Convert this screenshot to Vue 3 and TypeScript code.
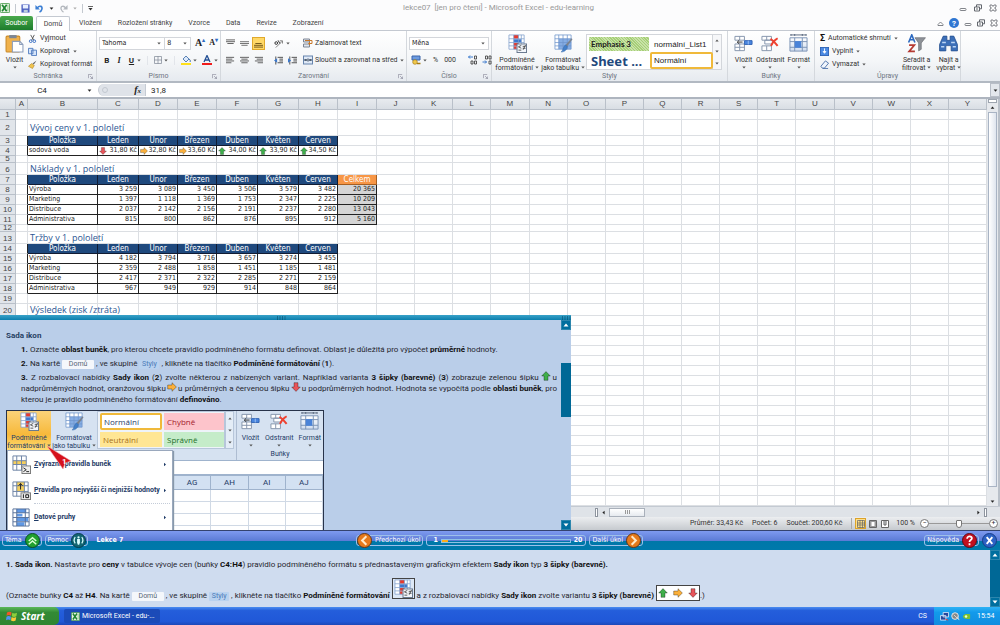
<script setup lang="ts">
import { ref } from 'vue'

type Trend = 'up' | 'flat' | 'down'
interface SheetRow {
  n: number
  size: string
  kind: 'blank' | 'title' | 'head' | 'data'
  label?: string
  values?: string[]
  total?: string
  trends?: Trend[]
}

const letters = 'ABCDEFGHIJKLMNOPQRSTUVWXY'.split('')
const extraColumns = letters.slice(9)
const months = ['Leden', 'Únor', 'Březen', 'Duben', 'Květen', 'Červen']

const blank = (n: number, size = 'std'): SheetRow => ({ n, size, kind: 'blank' })
const title = (n: number, size: string, label: string): SheetRow => ({ n, size, kind: 'title', label })
const head = (n: number, total?: string): SheetRow => ({ n, size: 'std', kind: 'head', label: 'Položka', values: months, total })
const data = (n: number, label: string, values: string[], total?: string, trends?: Trend[]): SheetRow =>
  ({ n, size: 'std', kind: 'data', label, values, total, trends })

const rows: SheetRow[] = [
  blank(1),
  title(2, 'tall', 'Vývoj ceny v 1. pololetí'),
  head(3),
  data(4, 'sodová voda', ['31,80 Kč', '32,80 Kč', '33,60 Kč', '34,00 Kč', '33,90 Kč', '34,50 Kč'], undefined,
    ['down', 'flat', 'flat', 'up', 'up', 'up']),
  blank(5, 'thin'),
  title(6, 'mid', 'Náklady v 1. pololetí'),
  head(7, 'Celkem'),
  data(8, 'Výroba', ['3 259', '3 089', '3 450', '3 506', '3 579', '3 482'], '20 365'),
  data(9, 'Marketing', ['1 397', '1 118', '1 369', '1 753', '2 347', '2 225'], '10 209'),
  data(10, 'Distribuce', ['2 037', '2 142', '2 156', '2 191', '2 237', '2 280'], '13 043'),
  data(11, 'Administrativa', ['815', '800', '862', '876', '895', '912'], '5 160'),
  blank(12, 'thin'),
  title(13, 'mid', 'Tržby v 1. pololetí'),
  head(14),
  data(15, 'Výroba', ['4 182', '3 794', '3 716', '3 657', '3 274', '3 455']),
  data(16, 'Marketing', ['2 359', '2 488', '1 858', '1 451', '1 185', '1 481']),
  data(17, 'Distribuce', ['2 417', '2 371', '2 322', '2 285', '2 271', '2 159']),
  data(18, 'Administrativa', ['967', '949', '929', '914', '848', '864']),
  blank(19),
  title(20, 'mid', 'Výsledek (zisk /ztráta)'),
  ...Array.from({ length: 19 }, (_, i) => blank(21 + i)),
]

const tabs = ['Vložení', 'Rozložení stránky', 'Vzorce', 'Data', 'Revize', 'Zobrazení']
const font = ref('Tahoma')
const fontSize = ref('8')
const numberFormat = ref('Měna')
const cellName = ref('C4')
const formula = ref('31,8')
const zoomLevel = ref(50)
const task = ref(1)
const taskCount = 20
</script>

<template>
  <svg class="defs" aria-hidden="true">
    <defs>
      <linearGradient id="g-grid" x1="0" y1="0" x2="0" y2="1"><stop offset="0" stop-color="#fff" /><stop offset="1" stop-color="#cfdcef" /></linearGradient>
      <symbol id="i-arrow" viewBox="0 0 10 10"><path d="M5 .6 9.3 5H7v4.3H3V5H.7z" fill="currentColor" stroke="#0006" stroke-width=".8" /></symbol>
      <symbol id="i-caret" viewBox="0 0 6 4"><path d="M.5.5h5L3 3.5z" fill="currentColor" /></symbol>
      <symbol id="i-cond" viewBox="0 0 20 20">
        <rect x="1" y="1" width="16" height="15" fill="#fff" />
        <path d="M6 1h5v4H6z" fill="#e8392c" /><path d="M6 5.500h8v3.500H6z" fill="#3c78d0" /><path d="M6 9.500h5v3H6zM6 13h3v3H6z" fill="#e8392c" />
        <path d="M1 1h16v15H1zM1 5h16M1 9h16M1 12.500h16M6 1v15M11 1v15M14 1v15" fill="none" stroke="#7f9fcb" stroke-width=".8" />
        <rect x="9.500" y="10.500" width="10" height="9" fill="#f3f6fb" stroke="#65758c" />
        <path d="M14 12l-3 1.500 3 1.500M11 17h3M15.500 13h3M15.500 15h3M18.500 11.500l-2.500 5" stroke="#444" stroke-width=".9" fill="none" />
      </symbol>
      <symbol id="i-table" viewBox="0 0 20 20">
        <rect x="1" y="1" width="17" height="15" fill="#fff" /><path d="M5 5h13v11H5z" fill="#85ade4" />
        <path d="M1 1h17v15H1zM1 5h17M1 9h17M1 12.500h17M5 1v15M9.500 1v15M14 1v15" fill="none" stroke="#6e94cc" stroke-width=".8" />
        <path d="M19.500 5.500 14 13l-2-1.500 6.500-7z" fill="#7b828d" /><path d="M14 13c0 4-3.500 6-6.500 6 2-1.500 2-5.500 4.500-7.500z" fill="#4480c8" stroke="#2b62a8" stroke-width=".5" />
      </symbol>
      <symbol id="i-insert" viewBox="0 0 20 18">
        <path d="M1 1.500h10v4H1zM1 9.500h10v7H1zM6 1.500v4M6 9.500v7M1 13h10" fill="#fff" stroke="#8595ac" />
        <path d="M11 6h8v4h-8z" fill="#4a86e0" stroke="#2e62b4" /><path d="M15 6v4" stroke="#9fc3f5" /><path d="M9 7.500H3.500M5.500 5.500l-2 2 2 2" fill="none" stroke="#333" />
      </symbol>
      <symbol id="i-delete" viewBox="0 0 20 18">
        <path d="M1 1.500h10v4H1zM1 11.500h10v5H1zM6 1.500v4M6 11.500v5M4 5.500h8v4H4z" fill="#fff" stroke="#8595ac" />
        <path d="M10 4c3 2 5 4 7.500 7.500M17.500 3.500C14 5.500 12 8 10.500 11.500" fill="none" stroke="#ee4130" stroke-width="2" />
      </symbol>
      <symbol id="i-format" viewBox="0 0 20 20">
        <path d="M1 4h18v14H1z" fill="url(#g-grid)" /><path d="M1 4h18v14H1zM1 8h18M1 14h18M6 4v14M14 4v14" fill="none" stroke="#7a92b5" />
        <rect x="6" y="7.500" width="7" height="7" fill="#4a83d8" /><path d="M2 1h16M2 0v2M18 0v2M6 0v2M14 0v2" stroke="#56657c" fill="none" />
      </symbol>
      <symbol id="i-excel" viewBox="0 0 12 12">
        <rect x=".5" y=".5" width="11" height="11" rx="1" fill="#e9f5e6" stroke="#3d9440" /><path d="M2.500 2 8 10M8 2 2.500 10" stroke="#1e8431" stroke-width="2" /><path d="M9.500 2v8" stroke="#81be7c" />
      </symbol>
      <symbol id="i-grip" viewBox="0 0 10 4"><path d="M1 1h1M3.500 1h1M6 1h1M8.500 1h1M1 3h1M3.500 3h1M6 3h1M8.500 3h1" stroke="#05405c" /></symbol>
      <symbol id="i-min" viewBox="0 0 8 8"><rect x="1" y="4.500" width="6" height="2" rx=".8" fill="#fff" stroke="#62666d" stroke-width=".8" /></symbol>
      <symbol id="i-restore" viewBox="0 0 8 8"><path d="M2.500 3V.8h5v4h-2M.5 3h5v4h-5z" fill="none" stroke="#62666d" /><path d="M2 5h2" stroke="#62666d" /></symbol>
      <symbol id="i-close" viewBox="0 0 8 8"><path d="M1 1h2l1 1.500L5 1h2v2L5.500 4 7 5v2H5L4 5.500 3 7H1V5l1.500-1L1 3z" fill="#fff" stroke="#62666d" stroke-width=".8" /></symbol>
      <symbol id="i-alignl" viewBox="0 0 10 9"><path d="M0 1h9M0 3h7M0 5h9M0 7h6" stroke="#555" /></symbol>
      <symbol id="i-alignc" viewBox="0 0 10 9"><path d="M0 1h10M1.500 3h7M0 5h10M1.500 7h7" stroke="#555" /></symbol>
      <symbol id="i-alignr" viewBox="0 0 10 9"><path d="M1 1h9M3 3h7M1 5h9M4 7h6" stroke="#555" /></symbol>
      <symbol id="i-top" viewBox="0 0 10 9"><path d="M0 .5h10M0 2.500h10M1.500 4.500h7" stroke="#555" /></symbol>
      <symbol id="i-mid" viewBox="0 0 10 9"><path d="M0 2.500h10M0 4.500h10M1.500 6.500h7" stroke="#666" /></symbol>
      <symbol id="i-bot" viewBox="0 0 10 9"><path d="M1.500 4.500h7M0 6.500h10M0 8.500h10" stroke="#6a4f14" /></symbol>
      <symbol id="i-merge" viewBox="0 0 10 9"><rect x=".5" y=".5" width="9" height="8" fill="#dfe9f7" stroke="#6784ad" /><path d="M1 4.500h2.500M9 4.500H6.500M2.500 3.500l1 1-1 1M7.500 3.500l-1 1 1 1M5 3v3" stroke="#234" fill="none" /></symbol>
      <symbol id="i-wrap" viewBox="0 0 10 9"><path d="M.5.500h6v3h-6zM.5 5.500h6v3h-6z" fill="#e0e7f0" stroke="#7e8694" /><path d="M2 2h7v3H6M7 3.500 5.500 5 7 6.500" fill="none" stroke="#c8782a" /></symbol>
      <symbol id="i-launch" viewBox="0 0 6 6"><path d="M.5 5V.500H5M2.500 2.500l3 3M5.500 3v2.500H3" fill="none" stroke="#889" stroke-width=".8" /></symbol>
    </defs>
  </svg>

  <div class="screen">
    <header class="titlebar">
      <div class="quick">
        <svg class="s10"><use href="#i-excel" /></svg><i class="vr"></i>
        <button aria-label="Uložit"><svg class="s9" viewBox="0 0 10 10"><path d="M.5.500h9v9h-9z" fill="#4b5fc0" /><path d="M2 1h6v4H2z" fill="#e8f0ff" /><path d="M3 6.500h4.500V9.500H3z" fill="#bcd" /></svg></button>
        <button aria-label="Zpět"><svg class="s9" viewBox="0 0 10 10"><path d="M2.500 4.500C5 1 9 2.500 7.500 6 7 7.500 6 8.500 5 9" fill="none" stroke="#3c7fd4" stroke-width="1.800" /><path d="M.5 1v5h5z" fill="#3c7fd4" /></svg></button>
        <svg class="caret dark"><use href="#i-caret" /></svg>
        <button aria-label="Znovu"><svg class="s9" viewBox="0 0 10 10"><path d="M7.500 4.500C5 1 1 2.500 2.500 6 3 7.500 4 8.500 5 9" fill="none" stroke="#b4b8be" stroke-width="1.500" /><path d="M9.500 1v5h-5z" fill="#b4b8be" /></svg></button>
        <svg class="caret pale"><use href="#i-caret" /></svg><i class="vr"></i>
        <svg class="s5" viewBox="0 0 6 6"><path d="M0 .5h6" stroke="#333" /><path d="M.5 2.500h5L3 5.500z" fill="#333" /></svg>
      </div>
      <h1>lekce07 &nbsp;[jen pro čtení] - Microsoft Excel - edu-learning</h1>
      <div class="winctl">
        <button aria-label="Minimalizovat"><svg class="s8"><use href="#i-min" /></svg></button>
        <button aria-label="Obnovit"><svg class="s8"><use href="#i-restore" /></svg></button>
        <button aria-label="Zavřít"><svg class="s8"><use href="#i-close" /></svg></button>
      </div>
    </header>

    <nav class="tabs">
      <button class="file">Soubor</button>
      <button class="active">Domů</button>
      <button v-for="t in tabs" :key="t">{{ t }}</button>
      <div class="winctl inner">
        <button aria-label="Sbalit pás"><svg class="s7" viewBox="0 0 7 7"><path d="M1 4.500 3.500 2 6 4.500v1H1z" fill="#fff" stroke="#62666d" stroke-width=".8" /></svg></button>
        <button class="helpdot" aria-label="Nápověda Excel">?</button>
        <button aria-label="Minimalizovat sešit"><svg class="s8"><use href="#i-min" /></svg></button>
        <button aria-label="Obnovit sešit"><svg class="s8"><use href="#i-restore" /></svg></button>
        <button aria-label="Zavřít sešit"><svg class="s8"><use href="#i-close" /></svg></button>
      </div>
    </nav>

    <section class="ribbon">
      <div class="group g-clip">
        <div class="tools">
          <button class="big paste">
            <svg class="s19" viewBox="0 0 18 18"><rect x="1" y="2" width="13" height="15" rx="1" fill="#f0b24c" stroke="#c98a29" /><rect x="4" y="1" width="7" height="3" fill="#7d8794" /><path d="M7 7h7l3 3v7H7z" fill="#fff" stroke="#8c9ebb" /><path d="M14 7v3h3" fill="none" stroke="#8c9ebb" /></svg>
            <span>Vložit</span><svg class="caret"><use href="#i-caret" /></svg>
          </button>
          <div class="stack">
            <button><svg class="s9" viewBox="0 0 10 10"><path d="M3 1l3.500 6M7 1 4 7" stroke="#555" fill="none" /><circle cx="3" cy="8" r="1.500" fill="none" stroke="#2f68c0" /><circle cx="7" cy="8" r="1.500" fill="none" stroke="#2f68c0" /></svg>Vyjmout</button>
            <button><svg class="s9" viewBox="0 0 10 10"><path d="M.5 1.500h5v6h-5zM4 3.500h5.500v6H4z" fill="#d6e5fa" stroke="#4d79bd" /></svg>Kopírovat<svg class="caret"><use href="#i-caret" /></svg></button>
            <button><svg class="s9" viewBox="0 0 10 10"><path d="M9.500.5 6.500 5 5 4z" fill="#666" /><path d="M4 4l3 2-2 3.500L.5 7z" fill="#f0c44d" stroke="#a97c1e" stroke-width=".6" /></svg>Kopírovat formát</button>
          </div>
        </div>
        <div class="glabel">Schránka<svg class="s5 launch"><use href="#i-launch" /></svg></div>
      </div>

      <div class="group g-font">
        <div class="tools rows">
          <div class="line">
            <div class="combo w-font"><select v-model="font" aria-label="Písmo"><option>Tahoma</option></select><svg class="caret"><use href="#i-caret" /></svg></div>
            <div class="combo w-size"><select v-model="fontSize" aria-label="Velikost písma"><option>8</option></select><svg class="caret"><use href="#i-caret" /></svg></div>
            <button class="serif a-big" aria-label="Zvětšit písmo">A<sup>▴</sup></button>
            <button class="serif a-small" aria-label="Zmenšit písmo">A<sup>▾</sup></button>
          </div>
          <div class="line fmt">
            <button class="fb">B</button><button class="fb it">I</button><button class="fb un">U</button><svg class="caret"><use href="#i-caret" /></svg><i class="vr"></i>
            <button aria-label="Ohraničení"><svg class="s8" viewBox="0 0 8 8"><path d="M.5.500h7v7h-7zM4 0v8M0 4h8" fill="none" stroke="#8b93a0" stroke-width=".8" /></svg></button><svg class="caret"><use href="#i-caret" /></svg><i class="vr"></i>
            <button aria-label="Barva výplně"><svg class="s10" viewBox="0 0 10 10"><path d="M2 4 5 1l3 3-3 3z" fill="#dbe8f9" stroke="#3667a5" stroke-width=".8" /><path d="M8 4c1.500 1 1.500 2 1 3" stroke="#3667a5" fill="none" /><path d="M0 8h10v2H0z" fill="#ffe01b" /></svg></button><svg class="caret"><use href="#i-caret" /></svg>
            <button aria-label="Barva písma"><svg class="s10" viewBox="0 0 10 10"><path d="M2 7 5 .5 8 7M3 5h4" fill="none" stroke="#234f94" stroke-width="1.300" /><path d="M0 8h10v2H0z" fill="#f01c1c" /></svg></button><svg class="caret"><use href="#i-caret" /></svg>
          </div>
        </div>
        <div class="glabel">Písmo<svg class="s5 launch"><use href="#i-launch" /></svg></div>
      </div>

      <div class="group g-align">
        <div class="tools rows">
          <div class="line al">
            <button aria-label="Nahoru"><svg class="s9"><use href="#i-top" /></svg></button>
            <button aria-label="Na střed"><svg class="s9"><use href="#i-mid" /></svg></button>
            <button class="on" aria-label="Dolů"><svg class="s9"><use href="#i-bot" /></svg></button>
            <button class="orient" aria-label="Orientace"><svg class="s9" viewBox="0 0 10 10"><path d="M2 9.500 9 2.500M6.500 2H9.500v3" fill="none" stroke="#777" /><circle cx="2.500" cy="4.500" r="1.500" fill="none" stroke="#222" /><path d="M4.500 1.500 6.500 5" stroke="#222" /></svg></button><svg class="caret"><use href="#i-caret" /></svg>
            <button class="txt"><svg class="s10"><use href="#i-wrap" /></svg>Zalamovat text</button>
          </div>
          <div class="line al">
            <button aria-label="Vlevo"><svg class="s9"><use href="#i-alignl" /></svg></button>
            <button aria-label="Na střed vodorovně"><svg class="s9"><use href="#i-alignc" /></svg></button>
            <button aria-label="Vpravo"><svg class="s9"><use href="#i-alignr" /></svg></button>
            <button class="orient" aria-label="Zmenšit odsazení"><svg class="s9" viewBox="0 0 10 9"><path d="M4 1h6M6 3h4M6 5h4M4 7h6M2 0v9" stroke="#444" /><path d="M3.500 2 0 4.500 3.500 7z" fill="#3b78cc" /></svg></button>
            <button aria-label="Zvětšit odsazení"><svg class="s9" viewBox="0 0 10 9"><path d="M4 1h6M6 3h4M6 5h4M4 7h6M2 0v9" stroke="#444" /><path d="M0 2l3.500 2.500L0 7z" fill="#3b78cc" /></svg></button>
            <button class="txt"><svg class="s10"><use href="#i-merge" /></svg>Sloučit a zarovnat na střed<svg class="caret"><use href="#i-caret" /></svg></button>
          </div>
        </div>
        <div class="glabel">Zarovnání<svg class="s5 launch"><use href="#i-launch" /></svg></div>
      </div>

      <div class="group g-num">
        <div class="tools rows">
          <div class="line"><div class="combo w-num"><select v-model="numberFormat" aria-label="Formát čísla"><option>Měna</option></select><svg class="caret"><use href="#i-caret" /></svg></div></div>
          <div class="line num">
            <button aria-label="Formát měny"><svg class="s10" viewBox="0 0 10 10"><path d="M1 1h8v4H1z" fill="#6b9ae0" stroke="#3b65aa" /><circle cx="4" cy="7" r="2.300" fill="#f2c94c" stroke="#a67b13" stroke-width=".7" /><path d="M6 8.500h3.500" stroke="#a67b13" stroke-width="1.500" /></svg></button><svg class="caret"><use href="#i-caret" /></svg>
            <button>%</button><button>000</button><i class="vr"></i>
            <button class="dec" aria-label="Přidat desetinné místo"><svg class="s10" viewBox="0 0 10 10"><path d="M5 2H.5M2 .5.500 2 2 3.500" fill="none" stroke="#3b78cc" /><path d="M6.500 1h2v3h-2zM3 6h2v3H3zM6.500 6h2v3h-2z" fill="none" stroke="#333" stroke-width=".8" /></svg></button>
            <button class="dec" aria-label="Odebrat desetinné místo"><svg class="s10" viewBox="0 0 10 10"><path d="M.5 7h4M3 5.500 4.500 7 3 8.500" fill="none" stroke="#3b78cc" /><path d="M3.500 1h2v3h-2zM7 1h2v3H7zM7 6h2v3H7z" fill="none" stroke="#333" stroke-width=".8" /></svg></button>
          </div>
        </div>
        <div class="glabel">Číslo<svg class="s5 launch"><use href="#i-launch" /></svg></div>
      </div>

      <div class="group g-style">
        <div class="tools">
          <button class="big wide"><svg class="s19"><use href="#i-cond" /></svg><span>Podmíněné<br />formátování <svg class="caret"><use href="#i-caret" /></svg></span></button>
          <button class="big wide"><svg class="s19"><use href="#i-table" /></svg><span>Formátovat<br />jako tabulku <svg class="caret"><use href="#i-caret" /></svg></span></button>
          <div class="gallery">
            <button class="emph">Emphasis 3</button><button>normální_List1</button>
            <button class="sheetname">Sheet ...</button><button class="picked">Normální</button>
          </div>
          <div class="spin"><svg class="caret up"><use href="#i-caret" /></svg><svg class="caret"><use href="#i-caret" /></svg><svg class="caret"><use href="#i-caret" /></svg></div>
        </div>
        <div class="glabel">Styly</div>
      </div>

      <div class="group g-cells">
        <div class="tools">
          <button class="big"><svg class="s19"><use href="#i-insert" /></svg><span>Vložit</span><svg class="caret"><use href="#i-caret" /></svg></button>
          <button class="big"><svg class="s19"><use href="#i-delete" /></svg><span>Odstranit</span><svg class="caret"><use href="#i-caret" /></svg></button>
          <button class="big"><svg class="s19"><use href="#i-format" /></svg><span>Formát</span><svg class="caret"><use href="#i-caret" /></svg></button>
        </div>
        <div class="glabel">Buňky</div>
      </div>

      <div class="group g-edit">
        <div class="tools">
          <div class="stack">
            <button><b class="sigma">Σ</b>Automatické shrnutí<svg class="caret"><use href="#i-caret" /></svg></button>
            <button><svg class="s9" viewBox="0 0 10 10"><rect x=".5" y=".5" width="9" height="9" fill="#4c8ae2" stroke="#2d62b5" /><path d="M5 1.500v4M3.500 5 5 7l1.500-2z" fill="#fff" stroke="#fff" /></svg>Vyplnit<svg class="caret"><use href="#i-caret" /></svg></button>
            <button><svg class="s9" viewBox="0 0 10 10"><path d="M1 7 6 1l3.500 2.500L5 9H2.500z" fill="#f0f5fc" stroke="#4a6fa8" /><path d="M3 9.500h6" stroke="#4a6fa8" /></svg>Vymazat<svg class="caret"><use href="#i-caret" /></svg></button>
          </div>
          <button class="big"><svg class="s19" viewBox="0 0 18 18"><path d="M1.500 8 4.500.8 7.500 8M2.500 5.500h4" fill="none" stroke="#2d6ac0" stroke-width="1.500" /><path d="M2 10.500h5L2 16.500h5.500" fill="none" stroke="#b53a33" stroke-width="1.600" /><path d="M7.500 3.500h10l-4 5v6l-2.500 1.500V8.500z" fill="#8e9298" stroke="#63676d" stroke-width=".6" /></svg><span>Seřadit a<br />filtrovat <svg class="caret"><use href="#i-caret" /></svg></span></button>
          <button class="big"><svg class="s19" viewBox="0 0 18 18"><path d="M4 2h3.500v4h3V2H14l3.500 8v6h-6v-5h-5v5h-6v-6z" fill="#3c6fb8" stroke="#244e8d" stroke-width=".7" /><path d="M3 8h3.500M11.500 8H15M2 12h3M13 12h3" stroke="#bcd6f5" stroke-width="1.500" /></svg><span>Najít a<br />vybrat <svg class="caret"><use href="#i-caret" /></svg></span></button>
        </div>
        <div class="glabel">Úpravy</div>
      </div>
    </section>

    <div class="formulabar">
      <input v-model="cellName" class="namebox" aria-label="Pole názvů" />
      <svg class="caret dark"><use href="#i-caret" /></svg>
      <div class="fx"><i></i><em>f<small>x</small></em></div>
      <input v-model="formula" class="formula" aria-label="Řádek vzorců" />
      <button class="expand" aria-label="Rozbalit"><svg class="caret dark"><use href="#i-caret" /></svg></button>
    </div>

    <main class="workspace">
      <div class="sheetrow">
        <div class="sheetclip">
          <table class="sheet">
            <colgroup>
              <col class="c-h" /><col class="c-a" /><col class="c-b" />
              <col class="c-m" /><col class="c-n" /><col class="c-n" /><col class="c-m" /><col class="c-m" /><col class="c-n" /><col class="c-n" />
              <col v-for="c in extraColumns" :key="c" />
            </colgroup>
            <thead>
              <tr><th class="corner"></th><th v-for="l in letters" :key="l">{{ l }}</th></tr>
            </thead>
            <tbody>
              <tr v-for="r in rows" :key="r.n" :class="[r.size, r.kind]">
                <th><div class="rh">{{ r.n }}</div></th>
                <td :class="{ edge: r.label && r.kind !== 'title' }"></td>
                <td class="lab">{{ r.label }}</td>
                <template v-if="r.values">
                  <td v-for="(v, i) in r.values" :key="i" class="val">
                    <div class="cell">
                      <svg v-if="r.trends" class="s8" :class="r.trends[i]"><use href="#i-arrow" /></svg><span>{{ v }}</span>
                    </div>
                  </td>
                </template>
                <template v-else><td v-for="i in 6" :key="i"></td></template>
                <td :class="{ total: r.total }">{{ r.total }}</td>
                <td v-for="c in extraColumns" :key="c"></td>
              </tr>
            </tbody>
          </table>
        </div>
        <div class="vscroll">
          <span class="split"></span><svg class="caret up dark"><use href="#i-caret" /></svg>
          <span class="thumb"></span>
          <svg class="caret dark"><use href="#i-caret" /></svg>
        </div>
      </div>
      <div class="hscroll">
        <span class="hpad"></span><i class="split"></i>
        <svg class="caret left dark"><use href="#i-caret" /></svg><span class="thumb"><i></i><i></i><i></i></span>
        <svg class="caret right dark end"><use href="#i-caret" /></svg><i class="split"></i>
      </div>
      <footer class="status">
        <span>Průměr: 33,43 Kč</span><span>Počet: 6</span><span>Součet: 200,60 Kč</span>
        <div class="views">
          <button class="on" aria-label="Normální"><svg class="s8" viewBox="0 0 8 8"><path d="M.5.500h7v7h-7zM0 3h8M0 5h8M3 0v8M5.500 0v8" fill="none" stroke="#666" stroke-width=".7" /></svg></button>
          <button aria-label="Rozložení"><svg class="s8" viewBox="0 0 8 8"><path d="M.5.500h7v7h-7z" fill="#999" stroke="#666" /><path d="M2.500 2h3v4h-3z" fill="#fff" /></svg></button>
          <button aria-label="Konce stránek"><svg class="s8" viewBox="0 0 8 8"><path d="M.5.500h7v7h-7zM3 0v5h2V0" fill="#fff" stroke="#666" /></svg></button>
        </div>
        <span>100 %</span>
        <div class="zoomer"><button>−</button><input v-model="zoomLevel" type="range" aria-label="Lupa" /><button>+</button></div>
      </footer>

      <aside class="help">
        <div class="grab"><svg class="g1"><use href="#i-grip" /></svg><svg class="g2"><use href="#i-grip" /></svg></div>
        <div class="helpmain">
          <article>
            <h2>Sada ikon</h2>
            <p><b>1.</b> Označte <b>oblast buněk</b>, pro kterou chcete pravidlo podmíněného formátu definovat. Oblast je důležitá pro výpočet <b>průměrné</b> hodnoty.</p>
            <p><b>2.</b> Na kartě <span class="chip">Domů</span> , ve skupině <span class="chip blue">Styly</span> , klikněte na tlačítko <b>Podmíněné formátování</b> (<b>1</b>).</p>
            <p class="just"><b>3.</b> Z rozbalovací nabídky <b>Sady ikon</b> (<b>2</b>) zvolte některou z nabízených variant. Například varianta <b>3 šipky (barevné)</b> (<b>3</b>) zobrazuje zelenou šipku <svg class="s10 up"><use href="#i-arrow" /></svg> u nadprůměrných hodnot, oranžovou šipku <svg class="s10 flat"><use href="#i-arrow" /></svg> u průměrných a červenou šipku <svg class="s10 down"><use href="#i-arrow" /></svg> u podprůměrných hodnot. Hodnota se vypočítá podle <b>oblasti buněk</b>, pro kterou je pravidlo podmíněného formátování <b>definováno</b>.</p>
            <div class="demo">
              <div class="demotop">
                <button class="big hot"><svg class="s19"><use href="#i-cond" /></svg><span>Podmíněné<br />formátování <svg class="caret"><use href="#i-caret" /></svg></span></button>
                <button class="big wide"><svg class="s19"><use href="#i-table" /></svg><span>Formátovat<br />jako tabulku <svg class="caret"><use href="#i-caret" /></svg></span></button>
                <div class="swatches">
                  <button class="picked">Normální</button><button class="bad">Chybně</button>
                  <button class="neutral">Neutrální</button><button class="good">Správně</button>
                </div>
                <div class="spin"><svg class="caret up"><use href="#i-caret" /></svg><svg class="caret"><use href="#i-caret" /></svg><svg class="caret"><use href="#i-caret" /></svg></div>
                <div class="democells">
                  <div class="trio">
                    <button class="big"><svg class="s19"><use href="#i-insert" /></svg><span>Vložit</span><svg class="caret"><use href="#i-caret" /></svg></button>
                    <button class="big"><svg class="s19"><use href="#i-delete" /></svg><span>Odstranit</span><svg class="caret"><use href="#i-caret" /></svg></button>
                    <button class="big"><svg class="s19"><use href="#i-format" /></svg><span>Formát</span><svg class="caret"><use href="#i-caret" /></svg></button>
                  </div>
                  <div class="dlabel">Buňky</div>
                </div>
              </div>
              <div class="demobar"></div>
              <table class="demosheet">
                <thead><tr><th>AG</th><th>AH</th><th>AI</th><th>AJ</th></tr></thead>
                <tbody><tr v-for="i in 4" :key="i"><td v-for="j in 4" :key="j"></td></tr></tbody>
              </table>
              <div class="menu">
                <button><svg class="s19" viewBox="0 0 20 20"><path d="M1 1h14v15H1z" fill="#fff" /><path d="M1 6h14v4H1z" fill="#f6cf5c" /><path d="M1 1h14v15H1zM1 6h14M1 10h14M5 1v15M10 1v15" fill="none" stroke="#6b82a4" /><rect x="10.500" y="11.500" width="9" height="8" fill="#eee" stroke="#777" /><path d="M12 13.500l3 2-3 2M15 17.500h3" fill="none" stroke="#222" /></svg><span><u>Z</u>výraznit pravidla buněk</span><svg class="caret right"><use href="#i-caret" /></svg></button>
                <button><svg class="s19" viewBox="0 0 20 20"><path d="M1 1h16v15H1z" fill="#fff" /><path d="M5 1h8v10H5z" fill="#f6cf5c" /><path d="M1 1h16v15H1zM1 5h16M1 11h16M5 1v15M13 1v15" fill="none" stroke="#6b82a4" /><path d="M9 9V3M7 5l2-2.500L11 5" stroke="#222" fill="none" /><rect x="9.500" y="12.500" width="10" height="7" fill="#eee" stroke="#777" /><path d="M12 14v4M14.500 14.500h3v3h-3z" stroke="#111" fill="none" /></svg><span><u>P</u>ravidla pro nejvyšší či nejnižší hodnoty</span><svg class="caret right"><use href="#i-caret" /></svg></button>
                <hr />
                <button><svg class="s19" viewBox="0 0 20 20"><path d="M1 1h17v18H1z" fill="#fff" /><path d="M5 1h10v4H5zM5 6h6v3H5zM5 10h12v4H5zM5 15h8v4H5z" fill="#5e98e6" /><path d="M1 1h17v18H1zM1 5h17M1 10h17M1 14.500h17M5 1v18M14 1v18" fill="none" stroke="#557099" /></svg><span><u>D</u>atové pruhy</span><svg class="caret right"><use href="#i-caret" /></svg></button>
              </div>
              <div class="pointer"><svg viewBox="0 0 26 26"><path d="M1 1 25 16l-6 2-2 6z" fill="#d6111c" stroke="#f2a0a2" stroke-width=".6" /></svg><b>1</b></div>
            </div>
          </article>
          <div class="bluescroll clear"><button aria-label="Posunout nahoru"><svg class="caret up"><use href="#i-caret" /></svg></button><span class="thumb"></span><button aria-label="Posunout dolů"><svg class="caret"><use href="#i-caret" /></svg></button></div>
        </div>
      </aside>
    </main>

    <section class="lesson">
      <div class="side">
        <button class="pill">Téma<svg class="s15" viewBox="0 0 16 16"><circle cx="8" cy="8" r="7.500" fill="#21a02f" stroke="#0b4a28" /><path d="M4 8.500 8 5l4 3.500M4 12l4-3.500 4 3.500" fill="none" stroke="#d9ffd2" stroke-width="1.600" /></svg></button>
        <button class="pill">Pomoc<svg class="s15" viewBox="0 0 16 16"><circle cx="8" cy="8" r="7.500" fill="#136673" stroke="#063a4c" /><path d="M6.500 6.500h3v4l-.8 2H7.300l-.8-2z" fill="#dff" /><circle cx="8" cy="4.700" r="1.200" fill="#dff" /><path d="M4.500 4.500c-1.500 2-1.500 4.500 0 6.500M11.500 4.500c1.500 2 1.500 4.500 0 6.500" fill="none" stroke="#dff" stroke-width="1.300" /></svg></button>
        <strong>Lekce 7</strong>
      </div>
      <div class="center">
        <button class="pill lead"><svg class="s15" viewBox="0 0 16 16"><circle cx="8" cy="8" r="7.500" fill="#e5791b" stroke="#5c3418" /><path d="M10 3.500 5.500 8l4.500 4.500" fill="none" stroke="#ffe9c8" stroke-width="2.200" /></svg>Předchozí úkol</button>
        <div class="pill prog"><b>{{ task }}</b><div class="track"><span :style="{ width: (task / taskCount) * 100 + '%' }"></span></div><b>{{ taskCount }}</b></div>
        <button class="pill">Další úkol<svg class="s15" viewBox="0 0 16 16"><circle cx="8" cy="8" r="7.500" fill="#e5791b" stroke="#5c3418" /><path d="M6 3.500 10.500 8 6 12.500" fill="none" stroke="#ffe9c8" stroke-width="2.200" /></svg></button>
      </div>
      <div class="side right">
        <button class="pill">Nápověda<svg class="s15" viewBox="0 0 16 16"><circle cx="8" cy="8" r="7.500" fill="#c2101f" stroke="#5a0a14" /><path d="M5.500 6C5.500 2.500 11 3 10.500 6c-.3 1.600-2.500 1.500-2.500 3.500M8 11v2" fill="none" stroke="#fff" stroke-width="1.900" /></svg></button>
        <button class="bare" aria-label="Zavřít lekci"><svg class="s15" viewBox="0 0 16 16"><circle cx="8" cy="8" r="7.500" fill="#2d62c4" stroke="#173a84" /><path d="M5 4.500l6 7M11 4.500l-6 7" stroke="#fff" stroke-width="2" /></svg></button>
      </div>
    </section>

    <section class="task">
      <div class="tasktext">
        <p><b>1. Sada ikon.</b> Nastavte pro <b>ceny</b> v tabulce vývoje cen (buňky <b>C4:H4</b>) pravidlo podmíněného formátu s přednastaveným grafickým efektem <b>Sady ikon</b> typ <b>3 šipky (barevné).</b></p>
        <p>(Označte buňky <b>C4</b> až <b>H4</b>. Na kartě <span class="chip">Domů</span> , ve skupině <span class="chip blue">Styly</span> , klikněte na tlačítko <b>Podmíněné formátování</b> <span class="boxed"><svg class="s19"><use href="#i-cond" /></svg></span> a z rozbalovací nabídky <b>Sady ikon</b> zvolte variantu <b>3 šipky (barevné)</b> <span class="boxed trends"><svg class="s10 up"><use href="#i-arrow" /></svg><svg class="s10 flat"><use href="#i-arrow" /></svg><svg class="s10 down"><use href="#i-arrow" /></svg></span>.)</p>
      </div>
      <div class="bluescroll"><button aria-label="Nahoru"><svg class="caret up"><use href="#i-caret" /></svg></button><span></span><button aria-label="Dolů"><svg class="caret"><use href="#i-caret" /></svg></button></div>
    </section>

    <footer class="taskbar">
      <button class="start"><svg class="s12" viewBox="0 0 12 12"><path d="M1 2.500c2-1 3-1 4.500 0L5 5.800c-1.500-1-3-.8-4.500 0z" fill="#f0562a" /><path d="M6.300 2.800c1.500 1 3 .8 4.700 0l-.6 3.400c-1.500 1-3 1-4.600 0z" fill="#8ccf3c" /><path d="M.5 6.800c1.500-1 3-.8 4.500 0l-.6 3.400c-1.500-1-3-.8-4.400 0z" fill="#4f94f2" /><path d="M5.600 7.100c1.500 1 3 1 4.600 0l-.6 3.400c-1.500 1-3 1-4.600 0z" fill="#fcc937" /></svg>Start</button>
      <button class="app"><svg class="s9"><use href="#i-excel" /></svg>Microsoft Excel - edu-...</button>
      <span class="lang">CS</span>
      <div class="tray">
        <svg class="s9" viewBox="0 0 10 10"><path d="M3.500.5h6v5h-6zM.5 4h6v5h-6z" fill="#27479c" stroke="#d3e2f7" /><path d="M6 8l3 1" stroke="#e33" /></svg>
        <svg class="s9" viewBox="0 0 10 10"><circle cx="4.500" cy="4.500" r="3.700" fill="#888" stroke="#eee" /><path d="M3 3l5 5M7 5l2 4" stroke="#ddd" /></svg>
        <svg class="s9" viewBox="0 0 10 10"><path d="M1 5c1-3 4-3 8-2.500v5C5 8 2 8 1 5z" fill="#7fc130" /><circle cx="4.500" cy="5" r="1.400" fill="#e9ffd0" /></svg>
        <time>15:54</time>
      </div>
    </footer>
  </div>
</template>

<style>
html, body { margin: 0; height: 100%; }
body { overflow: hidden; }
</style>

<style scoped>
* { box-sizing: border-box; }
.defs { position: absolute; width: 0; height: 0; }
.screen { display: flex; flex-direction: column; height: 100vh; overflow: hidden; background: #fcfcfd; color: #222; font: 7px/9px Roboto, "Noto Sans", sans-serif; }
button { display: flex; align-items: center; margin: 0; padding: 0; border: 0; background: none; color: inherit; font: inherit; white-space: nowrap; }
input, select { margin: 0; padding: 0; border: 0; background: none; color: inherit; font: inherit; outline: 0; appearance: none; min-width: 0; border-radius: 0; }
svg { flex: none; }
.s5 { width: 5px; height: 5px; } .s7 { width: 7px; height: 7px; } .s8 { width: 8px; height: 8px; } .s9 { width: 9px; height: 9px; }
.s10 { width: 10px; height: 10px; } .s12 { width: 12px; height: 12px; } .s15 { width: 15px; height: 15px; } .s19 { width: 19px; height: 19px; }
.caret { width: 4px; height: 3px; color: #555; }
.caret.dark { color: #222; width: 5px; } .caret.pale { color: #aaa; }
.caret.up { transform: rotate(180deg); } .caret.left { transform: rotate(90deg); } .caret.right { transform: rotate(-90deg); }
.up:not(.caret) { color: #3fae4b; } .down { color: #e8555b; transform: rotate(180deg); } .flat { color: #fbb03b; transform: rotate(90deg); }
.vr { width: 1px; height: 9px; background: #c3c8cf; }

.titlebar { display: grid; grid-template-columns: 1fr auto 1fr; align-items: center; height: 16px; flex: none; padding-right: 3px; }
.quick { display: flex; align-items: center; gap: 5px; height: 12px; }
h1 { margin: 0; font-size: 8px; font-weight: 400; color: #999; line-height: 14px; }
.winctl { display: flex; justify-content: flex-end; gap: 7px; }
.tabs { display: flex; align-items: stretch; height: 15px; flex: none; padding-right: 2px; border-bottom: 1px solid #c4c9d1; color: #444; }
.tabs > button { padding: 0 8px; }
.tabs > .file { width: 33px; margin-right: 3px; padding: 0; justify-content: center; border-radius: 2px 2px 0 0; background: linear-gradient(#4aa94c, #1d7d2c); color: #fff; }
.tabs > .active { width: 34px; margin: 0 1px -1px 0; padding: 0; justify-content: center; border: 1px solid #c4c9d1; border-bottom: 0; border-radius: 2px 2px 0 0; background: #fff; }
.tabs > .inner { margin-left: auto; align-items: center; gap: 5px; }
.helpdot { justify-content: center; width: 10px; height: 10px; border-radius: 50%; background: #2f76d2; color: #fff; font-weight: 700; font-size: 8px; }

.ribbon { display: flex; height: 52px; flex: none; background: linear-gradient(#fff, #f4f6f8 60%, #e6eaef); border-bottom: 2px solid #b2b9c2; color: #333; }
.group { display: flex; flex-direction: column; flex: none; border-right: 1px solid #d4d8dd; }
.g-clip { width: 97px; } .g-font { width: 124px; } .g-align { width: 186px; } .g-num { width: 85px; } .g-style { width: 236px; } .g-cells { width: 87px; } .g-edit { width: 146px; }
.tools { display: flex; flex: 1; padding: 3px 2px 0; min-height: 0; }
.tools.rows { flex-direction: column; gap: 3px; padding: 5px 2px 0; }
.line { display: flex; align-items: center; height: 14px; }
.glabel { position: relative; height: 9px; text-align: center; color: #6d7581; }
.launch { position: absolute; right: 3px; top: 2px; }
.big { flex-direction: column; align-self: flex-start; flex: none; text-align: center; line-height: 8px; gap: 3px; }
.big > .caret { margin-top: -1px; }
.big span { color: #333; }
.big span .caret { vertical-align: 1px; }
.wide { width: 46px; }
.paste { width: 25px; }
.stack { display: flex; flex-direction: column; gap: 4px; }
.stack button { gap: 3px; height: 9px; }
.g-clip .stack { padding-left: 1px; }
.sigma { width: 9px; font-size: 9px; color: #111; text-align: center; }
.combo { display: flex; align-items: center; height: 13px; padding: 0 3px 0 2px; border: 1px solid #d3d6db; background: #fff; color: #222; }
.combo select { flex: 1; font-family: "DejaVu Sans Condensed", sans-serif; }
.w-font { width: 67px; } .w-size { width: 26px; border-left: 0; } .w-num { width: 80px; }
.serif { margin-left: 4px; font: bold 10px/10px "Liberation Serif", serif; color: #222; align-items: flex-start; }
.a-small { font-size: 8px; } sup { font-size: 6px; line-height: 4px; color: #2f6cc4; }
.fmt { gap: 5px; padding-left: 4px; }
.fmt .vr { margin: 0 1px; background: #e2e5ea; }
.fmt .caret { margin-left: -3px; }
.fb { width: 8px; justify-content: center; font-weight: 700; font-size: 8px; color: #222; }
.it { font-style: italic; font-family: "Liberation Serif", serif; } .un { text-decoration: underline; }
.al { padding-left: 1px; gap: 1px; }
.al > button { width: 13px; height: 13px; justify-content: center; }
.al > .on { border: 1px solid #e0a92c; background: #ffd867; }
.al > .orient { margin-left: 6px; } .al > .txt { margin-left: auto; gap: 2px; justify-content: flex-start; width: 101px; }
.num { gap: 6px; padding-left: 2px; } .num .caret { margin-left: -4px; } .dec + .dec { margin-left: -2px; }
.gallery { display: grid; grid-template-columns: 62px 63px; grid-template-rows: 16px 17px; width: 127px; height: 36px; padding: 1px; border: 1px solid #d3d6db; background: #fff; color: #222; }
.gallery button { padding-left: 4px; font-size: 8px; font-family: "Liberation Sans", Arial, sans-serif; }
.gallery .emph { margin: 1px; padding-left: 2px; background: repeating-linear-gradient(45deg, #a6cf77 0 1px, #c8e2a8 1px 2px); font-family: Lato, sans-serif; font-weight: 700; }
.gallery .sheetname { padding-left: 3px; font: bold 13px/14px "Noto Sans", sans-serif; color: #1f497d; }
.picked.picked { border: 2px solid #f0b93a; border-radius: 2px; background: #fff; padding-left: 2px; }
.spin { display: flex; flex-direction: column; justify-content: space-around; align-items: center; width: 9px; height: 36px; border: 1px solid #d3d6db; background: #f6f7f9; }
.g-style .spin { border-left: 0; }
.g-cells .tools { justify-content: space-between; padding: 3px 4px 0 6px; }
.g-edit .tools { gap: 5px; padding-left: 5px; }
.g-edit .stack { width: 77px; }

.formulabar { display: flex; align-items: center; height: 16px; flex: none; border-bottom: 2px solid #aeb5bf; background: #fff; font-size: 8px; color: #222; }
.namebox { width: 84px; text-align: center; }
.formulabar > .caret { margin: 0 6px 0 3px; }
.fx { display: flex; align-items: center; justify-content: space-between; width: 48px; height: 12px; margin-right: 5px; padding: 0 4px 0 3px; border: 1px solid #c5cbd3; border-width: 0 1px; border-radius: 6px 0 0 6px; background: #dfe3e9; }
.fx i { width: 6px; height: 6px; border-radius: 50%; border: 1px solid #c2c8d0; }
.fx em { font: italic bold 10px/10px "Liberation Serif", serif; } .fx small { font-size: 7px; }
.formula { flex: 1; }
.expand { width: 10px; height: 14px; justify-content: center; background: #e3e7ec; border: 1px solid #b8bec7; }

.workspace { position: relative; display: flex; flex-direction: column; flex: 1; min-height: 0; }
.sheetrow { display: flex; flex: 1; min-height: 0; }
.sheetclip { flex: 1; min-width: 0; overflow: hidden; background: #fff; }
.sheet { width: 100%; table-layout: fixed; border-collapse: separate; border-spacing: 0; font-family: "DejaVu Sans Condensed", "Noto Sans", sans-serif; color: #222; }
.c-h { width: 16px; } .c-a { width: 12px; } .c-b { width: 70px; } .c-m { width: 41px; } .c-n { width: 39px; }
.sheet th, .sheet td { height: 10px; padding: 0 1px; border: solid #dcdfe3; border-width: 0 1px 1px 0; white-space: nowrap; line-height: 9px; font-size: 7px; font-weight: 400; text-align: right; vertical-align: middle; }
.sheet th { padding: 0; background: #e1e5ea; border-color: #b9c0c9; text-align: center; font-family: "Liberation Sans", Arial, sans-serif; font-size: 8px; color: #444; }
.sheet thead th { height: 11px; line-height: 10px; background: linear-gradient(#e8ebef, #d9dee4); }
.rh { height: 9px; overflow: hidden; }
.sheet .tall th, .sheet .tall td { height: 16px; } .sheet .mid th, .sheet .mid td { height: 12px; line-height: 11px; }
.sheet .thin th, .sheet .thin td { height: 7px; line-height: 6px; } .thin .rh { height: 6px; }
.sheet .title .lab { padding-left: 2px; font-family: "Open Sans", "Noto Sans", sans-serif; font-size: 9px; color: #2a5592; text-align: left; }
.sheet .lab { text-align: left; }
.sheet .head .lab, .sheet .head .val { background: #1f497d; border-color: #111c33; color: #fff; text-align: center; font-size: 8px; }
.sheet .edge { border-right-color: #222; }
.sheet .data .lab, .sheet .data .val, .sheet .data .total { border-color: #222; }
.cell { display: flex; justify-content: flex-end; align-items: center; }
.cell svg { margin: 0 -1px 0 0; position: static; } .data .cell:has(svg) { justify-content: space-between; } .head .cell { justify-content: center; }
.sheet .data .total { background: #d5d5d5; }
.sheet .head .total { background: #f79646; border-color: #a55f22; color: #fff; text-align: center; font-size: 8px; }
.vscroll { display: flex; flex-direction: column; align-items: center; width: 13px; background: #e6e9ed; border-right: 2px solid #b9c0c9; gap: 3px; }
.vscroll .split { width: 9px; height: 4px; border: 1px solid #9da5af; background: #fff; }
.vscroll .thumb { flex: 1; width: 9px; margin-bottom: 10px; border: 1px solid #a9b4c4; background: linear-gradient(90deg, #fff, #dfe5ee); }
.vscroll > .caret:last-child { margin-bottom: 3px; }
.hscroll { display: flex; align-items: center; height: 11px; flex: none; padding-right: 13px; border-top: 1px solid #c4cad2; background: #dfe3e8; gap: 3px; }
.hpad { width: 60%; } .hscroll .split { width: 3px; height: 9px; border: 1px solid #8d949e; background: #fff; }
.hscroll .thumb { display: flex; align-items: center; justify-content: center; gap: 1px; width: 36px; height: 9px; border: 1px solid #a9b0ba; background: linear-gradient(#fff, #e6eaef); }
.thumb i { width: 1px; height: 4px; background: #999; } .hscroll .end { margin-left: auto; }
.status { display: flex; justify-content: flex-end; align-items: center; gap: 9px; height: 13px; flex: none; padding-right: 2px; background: linear-gradient(#eceef0, #c6cacf); color: #333; }
.views { display: flex; gap: 1px; padding-left: 3px; border-left: 1px solid #aaa; margin-right: -3px; } .views button { width: 11px; height: 11px; justify-content: center; } .views .on { border: 1px solid #dca32a; background: #ffe08a; }
.zoomer { display: flex; align-items: center; margin-left: -4px; }
.zoomer button { width: 9px; height: 9px; justify-content: center; border: 1px solid #777; border-radius: 50%; background: #fff; line-height: 7px; }
.zoomer input { width: 60px; height: 9px; background: linear-gradient(#999, #999) center / 100% 1px no-repeat; }
.zoomer input::-webkit-slider-thumb { appearance: none; width: 6px; height: 8px; border: 1px solid #777; border-radius: 1px 1px 3px 3px; background: #fff; }

.help { position: absolute; left: 0; bottom: 0; display: flex; flex-direction: column; width: 57.1%; height: 215px; background: #bacee9; font-size: 8px; color: #26262e; }
.grab { display: flex; justify-content: flex-end; align-items: center; height: 5px; flex: none; background: linear-gradient(#39a2c8, #0c7fae); }
.grab svg { width: 10px; height: 4px; } .g1 { margin-right: auto; margin-left: auto; }
.helpmain { display: flex; flex: 1; min-height: 0; }
article { flex: 1; min-width: 0; padding: 10px 4px 0 6px; overflow: hidden; line-height: 11px; }
h2 { margin: 0 0 3px; font-size: 8px; line-height: 11px; color: #263f63; }
article p { margin: 0 0 3px 15px; } .just { text-align: justify; }
p svg { vertical-align: -1px; margin: -2px -1px 0; }
.chip { display: inline-block; width: 32px; height: 9px; background: #f4f7fb; color: #567; text-align: center; line-height: 9px; font-size: 7px; vertical-align: 0; border-radius: 1px; }
.chip.blue { width: 20px; background: #b9d2ef; color: #4b7bb8; }
.demo { position: relative; width: 318px; height: 140px; margin-top: 5px; border: 1px solid #28334a; background: #d6e2f1; line-height: 8px; font-size: 7px; color: #1e3a66; overflow: hidden; }
.demotop { display: flex; height: 50px; border-bottom: 1px solid #9fb3cd; }
.demo .big span { color: #1e3a66; } .demo .big { padding-top: 1px; }
.demo .hot { width: 44px; height: 39px; background: linear-gradient(#fbd37a, #f7b93b 60%, #ffdc72); }
.swatches { display: grid; grid-template: 19px 17px / 64px 62px; width: 128px; height: 38px; padding: 0 1px; background: #eef3f9; border: 1px solid #b7c6da; }
.swatches button { margin: 1px; padding-left: 3px; font-size: 8px; font-family: "Open Sans", sans-serif; }
.bad { background: #fdc4cb; color: #a3202c; } .neutral { background: #ffe694; color: #a9711b; } .good { background: #c5ecc9; color: #1b6e28; }
.demo .spin { height: 38px; border-color: #b7c6da; background: #e4edf7; }
.democells { display: flex; flex-direction: column; flex: 1; margin-left: 2px; border-left: 1px solid #aebdd2; }
.trio { display: flex; justify-content: space-between; padding: 0 2px 0 4px; } .dlabel { text-align: center; margin-top: 3px; }
.demobar { height: 14px; border-bottom: 1px solid #9fb3cd; background: #fff; }
.demosheet { width: 150px; margin-left: auto; border-collapse: collapse; table-layout: fixed; }
.demosheet th { height: 14px; padding: 0; border: 1px solid #9fb3cd; background: #d3e1f2; font-weight: 400; font-size: 8px; }
.demosheet td { height: 12px; padding: 0; border: 1px solid #d0d9e5; background: #fff; }
.menu { position: absolute; left: 0; top: 39px; width: 166px; height: 100px; border: 1px solid #9aa8bd; background: #fff; box-shadow: 1px 1px 1px #8899aa; }
.menu button { width: 100%; height: 26px; padding: 0 5px 0 4px; gap: 3px; font-weight: 700; } .menu button .caret { margin-left: auto; color: #1e3a66; }
.menu hr { margin: 0 2px 0 26px; border: 0; border-top: 1px dotted #c4ccd8; }
.pointer { position: absolute; left: 39px; top: 34px; width: 26px; height: 26px; color: #fff; } .pointer svg { width: 26px; height: 26px; } .pointer b { position: absolute; left: 16px; top: 13px; font-size: 8px; }
.bluescroll { display: flex; flex-direction: column; width: 10px; background: #006896; flex: none; }
.bluescroll button { width: 10px; height: 10px; justify-content: center; border: 1px solid #2c86ad; background: #006f9f; } .bluescroll .caret { width: 6px; height: 4px; color: #fff; }
.bluescroll span { flex: 1; }
.clear { background: none; } .clear .thumb { flex: none; height: 54px; margin: 33px 0 auto; background: #006896; }

.lesson { display: flex; align-items: center; justify-content: space-between; height: 20px; flex: none; padding: 0 3px 0 2px; border-top: 1px solid #34436f; background: linear-gradient(#7e9af0, #5c7cd6 50%, #0077a8 50%, #0079ab); color: #fff; font-family: "DejaVu Sans Condensed", sans-serif; }
.side, .center { display: flex; align-items: center; gap: 3px; } .side { flex: 1; } .right { justify-content: flex-end; }
.pill { display: flex; align-items: center; height: 11px; padding: 0 1px 0 2px; gap: 3px; border: 1px solid #9dc0ea; border-radius: 3px; }
.lead { padding: 0 2px 0 0; }
.lesson strong { margin-left: 5px; }
.prog { width: 160px; padding: 0 3px 0 6px; } .track { flex: 1; height: 4px; border: 1px solid #8fc1e4; } .track span { display: block; height: 100%; background: #ffae1a; }
.task { display: flex; height: 57px; flex: none; background: #cfdcef; font-size: 8px; color: #26262e; }
.tasktext { flex: 1; padding: 9px 6px 0; line-height: 11px; } .tasktext p { margin: 0 0 8px; white-space: nowrap; }
.boxed { display: inline-flex; border: 1px solid #444; background: #dde8f6; padding: 0 1px; } .trends { gap: 5px; padding: 2px 1px; background: #fff; } .boxed svg { margin: 0; }
b { color: #111; } .lesson b, .pointer b { color: #fff; }

.taskbar { display: flex; align-items: stretch; height: 18px; flex: none; background: linear-gradient(#4a8cf0, #245edb 20%, #2058d8 80%, #1c48b8); color: #fff; }
.start { width: 59px; padding-left: 6px; gap: 3px; border-radius: 0 5px 5px 0; background: linear-gradient(#5cb85a, #338a35 30%, #2f8531); font: italic bold 10px/14px "Open Sans", sans-serif; }
.app { width: 96px; margin: 2px 0 2px 5px; padding-left: 7px; gap: 2px; border-radius: 2px; background: #1b4bb8; }
.lang { margin-left: auto; align-self: center; padding: 0 7px; }
.tray { display: flex; align-items: center; gap: 2px; width: 66px; padding-left: 6px; background: linear-gradient(#2fb2f5, #129aeb 30%, #118ddf); } .tray time { margin-left: 4px; }
</style>
